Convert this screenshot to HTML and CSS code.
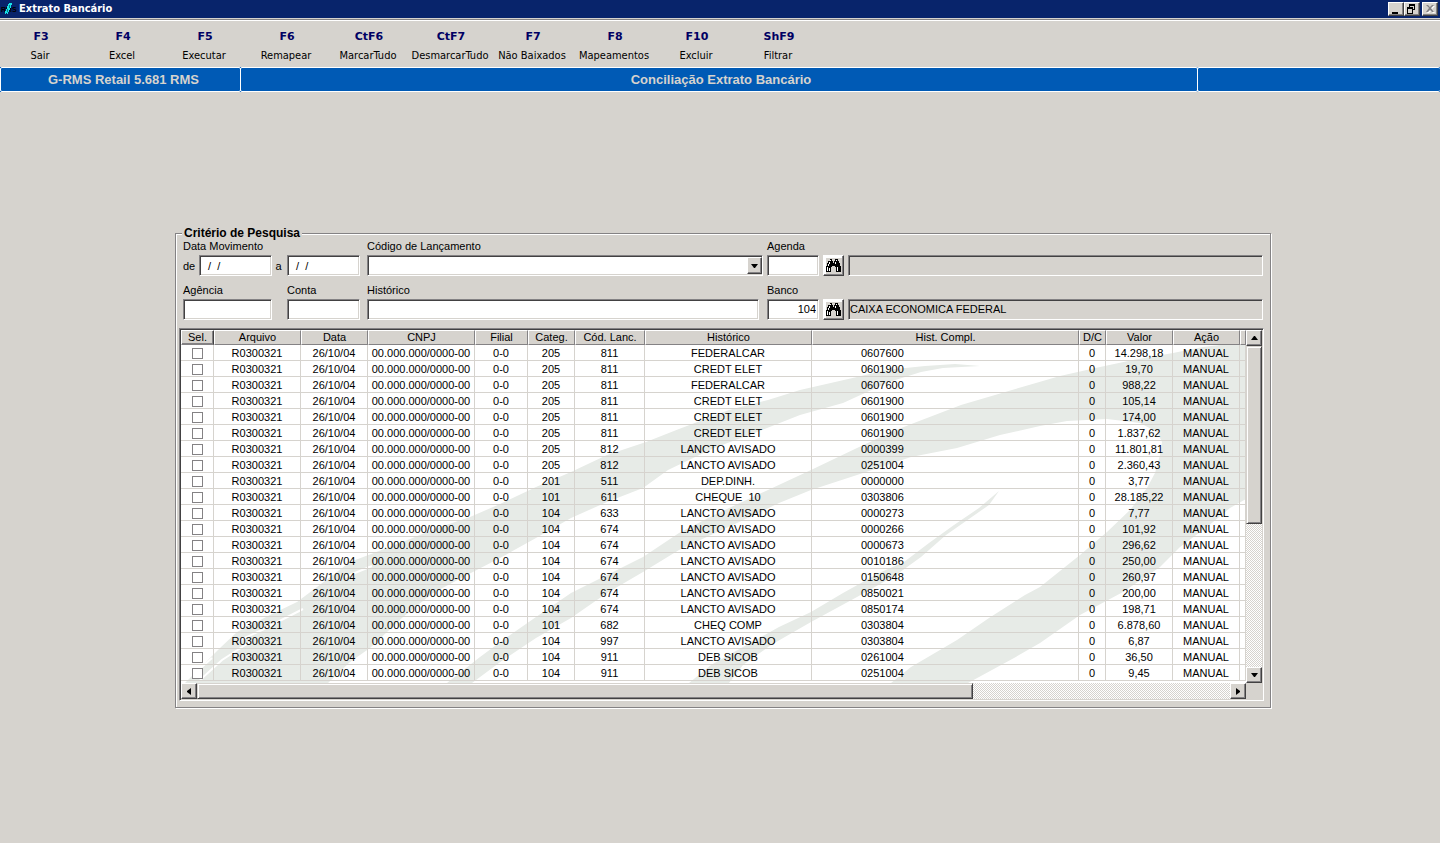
FILE: index.html
```html
<!DOCTYPE html>
<html lang="pt-BR">
<head>
<meta charset="utf-8">
<title>Extrato Bancário</title>
<link rel="stylesheet" href="styles.css">
</head>
<body>
<svg class="defs" aria-hidden="true">
  <symbol id="binoculars" viewBox="0 0 15 13">
    <path d="M4 0h2v2h1v2h1V2h1V0h3v2h1v2h1v3h1v6h-5V8H9V7H6v1H5v5H0V7h1V4h1V2h2z" fill="#000"/>
    <path d="M4 1h1v1H4zM3 3h1v2H3zM10 1h1v1h-1zM9 3h1v2H9zM2 5h1v2H2zM1 8h1v4H1zM3 9h1v3H3zM11 8h1v4h-1z" fill="#fff"/>
  </symbol>
</svg>

<header class="titlebar">
  <svg class="logo" viewBox="0 0 18 18" width="18" height="18" aria-hidden="true">
    <text x="1" y="12" class="logo-text">RMS</text>
    <path d="M11 3h-2v1H8v2H7v3H6v2H5v3h1v-1h1v1h1v-2h1v-2h1V8h1V5h1V3z" fill="#18e3e7"/>
    <path d="M9 5h1v3H9zM7 9h1v3H7z" fill="#087d84"/>
  </svg>
  <h1 class="title">Extrato Bancário</h1>
  <div class="window-buttons">
    <button class="win-btn" aria-label="Minimizar"><svg viewBox="0 0 12 10" width="12" height="10"><path d="M2 8h6v2H2z"/></svg></button>
    <button class="win-btn" aria-label="Restaurar"><svg viewBox="0 0 12 10" width="12" height="10"><path d="M3 0h6v6H7v4H1V3h2zM4 2v1h3v2h1V2zM2 5v4h4V5z" fill-rule="evenodd"/></svg></button>
    <button class="win-btn win-close" aria-label="Fechar" disabled><svg viewBox="0 0 12 10" width="12" height="10"><path d="M3 2h2l2 2 2-2h2L8 5l3 4H9L7 7 5 9H3l3-4z" fill="#fff"/><path d="M2 1h2l2 2 2-2h2L7 4l3 4H8L6 6 4 8H2l3-4z" fill="#848284"/></svg></button>
  </div>
</header>

<nav class="toolbar">
  <button class="tool"><b>F3</b><span>Sair</span></button>
  <button class="tool"><b>F4</b><span>Excel</span></button>
  <button class="tool"><b>F5</b><span>Executar</span></button>
  <button class="tool"><b>F6</b><span>Remapear</span></button>
  <button class="tool"><b>CtF6</b><span>MarcarTudo</span></button>
  <button class="tool"><b>CtF7</b><span>DesmarcarTudo</span></button>
  <button class="tool"><b>F7</b><span>Não Baixados</span></button>
  <button class="tool"><b>F8</b><span>Mapeamentos</span></button>
  <button class="tool"><b>F10</b><span>Excluir</span></button>
  <button class="tool"><b>ShF9</b><span>Filtrar</span></button>
</nav>

<div class="banner">
  <div class="banner-side">G-RMS Retail 5.681 RMS</div>
  <div class="banner-main">Conciliação Extrato Bancário</div>
  <div class="banner-side"></div>
</div>

<main class="content">
  <fieldset class="group">
    <legend>Critério de Pesquisa</legend>

    <div class="criteria">
      <label class="span2" for="date-from">Data Movimento</label>
      <label for="code">Código de Lançamento</label>
      <label class="span3" for="agenda">Agenda</label>

      <div class="from">
        <label for="date-from">de</label>
        <input class="field date" id="date-from" type="text" value="  /  /">
        <label class="to" for="date-to">a</label>
      </div>
      <input class="field date" id="date-to" type="text" value="  /  /">
      <div class="combo">
        <select class="field" id="code"><option></option></select>
        <span class="combo-arrow"><svg viewBox="0 0 7 4" width="7" height="4"><path d="M0 0h7L4 4H3z"/></svg></span>
      </div>
      <input class="field" id="agenda" type="text">
      <button class="lookup" aria-label="Procurar agenda"><svg width="15" height="13"><use href="#binoculars"/></svg></button>
      <input class="field" type="text" aria-label="Nome da agenda" readonly>

      <label class="second" for="agency">Agência</label>
      <label class="second" for="account">Conta</label>
      <label class="second" for="history">Histórico</label>
      <label class="second span3" for="bank">Banco</label>

      <input class="field agency" id="agency" type="text">
      <input class="field date" id="account" type="text">
      <input class="field history" id="history" type="text">
      <input class="field number" id="bank" type="text" value="104">
      <button class="lookup" aria-label="Procurar banco"><svg width="15" height="13"><use href="#binoculars"/></svg></button>
      <input class="field" type="text" aria-label="Nome do banco" value="CAIXA ECONOMICA FEDERAL" readonly>
    </div>

    <div class="grid-frame">
      <div class="grid-view">
        <svg class="watermark" viewBox="181 345 1065 338" preserveAspectRatio="none" aria-hidden="true">
          <g fill="#e7ebe7">
            <path d="M980 366L955 364L925 366L886 370L857 377L800 390L768 400L729 410L679 429L646 442L607 455L571 472L536 487L500 504L470 517L440 527L400 543L350 562L313 590L297 602L270 615L237 632L220 648L185 683H328L350 662L370 648L403 617L433 593L467 575L500 558L536 538L571 518L607 502L643 488L668 470L714 448L757 432L800 415L843 403L889 382L921 372L943 368z"/>
            <path d="M1246 345H1220L1203 347L1173 353L1133 360L1100 367L1060 376L1029 385L961 405L914 423L896 430L857 448L811 470L768 490L714 515L679 533L643 557L607 575L571 593L536 617L503 640L480 657L447 683H472L503 660L536 638L571 618L607 593L643 572L679 550L711 535L750 517L779 503L811 490L857 475L911 457L957 448L1000 435L1040 426L1067 421L1107 419L1140 423L1157 432L1162 442L1160 455L1155 473L1147 488L1130 510L1107 532L1080 555L1040 587L1025 595L989 618L957 640L911 667L891 683H968L1014 658L1040 643L1080 615L1123 592L1160 567L1180 547L1207 527L1230 508L1246 499z"/>
            <path d="M999 491L979 508L954 525L929 543L904 562L879 573L843 593L811 612L779 627L743 647L711 665L689 683H729L743 665L771 645L811 622L857 597L896 575L921 557L946 535L989 505z"/>
          </g>
          <path d="M200 680L222 660L250 642M196 672L212 658M238 641L262 630L303 609M345 577L372 566" fill="none" stroke="#fff" stroke-width="2"/>
        </svg>
        <table class="grid">
          <colgroup>
            <col class="w-sel"><col class="w-file"><col class="w-std"><col class="w-cnpj"><col class="w-branch"><col class="w-categ"><col class="w-code"><col class="w-hist"><col><col class="w-dc"><col class="w-std"><col class="w-std"><col class="w-end">
          </colgroup>
          <thead>
            <tr><th class="current">Sel.</th><th>Arquivo</th><th>Data</th><th>CNPJ</th><th>Filial</th><th>Categ.</th><th>Cód. Lanc.</th><th>Histórico</th><th>Hist. Compl.</th><th>D/C</th><th>Valor</th><th>Ação</th><th></th></tr>
          </thead>
          <tbody id="rows"></tbody>
        </table>
      </div>
      <div class="scroll vertical">
        <button class="scroll-btn" aria-label="Para cima"><svg viewBox="0 0 7 4" width="7" height="4"><path d="M3 0h1l3 4H0z"/></svg></button>
        <div class="thumb"></div>
        <div class="track"></div>
        <button class="scroll-btn" aria-label="Para baixo"><svg viewBox="0 0 7 4" width="7" height="4"><path d="M0 0h7L4 4H3z"/></svg></button>
      </div>
      <div class="scroll horizontal">
        <button class="scroll-btn" aria-label="Para a esquerda"><svg viewBox="0 0 4 7" width="4" height="7"><path d="M4 0v7L0 4V3z"/></svg></button>
        <div class="thumb"></div>
        <div class="track"></div>
        <button class="scroll-btn" aria-label="Para a direita"><svg viewBox="0 0 4 7" width="4" height="7"><path d="M0 0v7l4-3V3z"/></svg></button>
      </div>
    </div>
  </fieldset>
</main>
<script src="rows.js"></script>
</body>
</html>
```

FILE: rows.js
```js
// category, entry code, description, complement, amount
const entries = [
  ["205", "811", "FEDERALCAR", "0607600", "14.298,18"],
  ["205", "811", "CREDT ELET", "0601900", "19,70"],
  ["205", "811", "FEDERALCAR", "0607600", "988,22"],
  ["205", "811", "CREDT ELET", "0601900", "105,14"],
  ["205", "811", "CREDT ELET", "0601900", "174,00"],
  ["205", "811", "CREDT ELET", "0601900", "1.837,62"],
  ["205", "812", "LANCTO AVISADO", "0000399", "11.801,81"],
  ["205", "812", "LANCTO AVISADO", "0251004", "2.360,43"],
  ["201", "511", "DEP.DINH.", "0000000", "3,77"],
  ["101", "611", "CHEQUE  10", "0303806", "28.185,22"],
  ["104", "633", "LANCTO AVISADO", "0000273", "7,77"],
  ["104", "674", "LANCTO AVISADO", "0000266", "101,92"],
  ["104", "674", "LANCTO AVISADO", "0000673", "296,62"],
  ["104", "674", "LANCTO AVISADO", "0010186", "250,00"],
  ["104", "674", "LANCTO AVISADO", "0150648", "260,97"],
  ["104", "674", "LANCTO AVISADO", "0850021", "200,00"],
  ["104", "674", "LANCTO AVISADO", "0850174", "198,71"],
  ["101", "682", "CHEQ COMP", "0303804", "6.878,60"],
  ["104", "997", "LANCTO AVISADO", "0303804", "6,87"],
  ["104", "911", "DEB SICOB", "0261004", "36,50"],
  ["104", "911", "DEB SICOB", "0251004", "9,45"]
];

document.getElementById("rows").innerHTML = entries.map(([categ, code, hist, extra, amount], i) => `
  <tr>
    <td><input class="check" type="checkbox" aria-label="Selecionar linha ${i + 1}"></td>
    <td>R0300321</td><td>26/10/04</td><td>00.000.000/0000-00</td><td>0-0</td>
    <td>${categ}</td><td>${code}</td><td>${hist}</td><td class="extra">${extra}</td>
    <td>0</td><td>${amount}</td><td>MANUAL</td><td></td>
  </tr>`).join("");
```

FILE: styles.css
```css
:root {
  --face: #d6d3ce;
  --shadow: #848284;
  --dark: #424142;
  --ui: "Liberation Sans", Arial, sans-serif;
  --caption: "DejaVu Sans Condensed", "DejaVu Sans", sans-serif;
}

* { box-sizing: border-box; }

body {
  margin: 0;
  min-height: 100vh;
  background: var(--face);
  color: #000;
  font: 11px/12px var(--ui);
}

button, input, select { font: inherit; color: inherit; margin: 0; }
button { padding: 0; }
.defs { display: none; }

/* Title bar */
.titlebar {
  display: flex;
  align-items: center;
  height: 18px;
  padding-right: 2px;
  background: #08246b;
}
.logo { flex: none; }
.logo-text { font: bold 7px var(--ui); fill: #000; }
.title {
  flex: 1;
  margin: 0 0 0 1px;
  color: #fff;
  font: bold 11px/18px var(--caption);
}
.window-buttons { display: flex; }
.win-btn {
  display: flex;
  width: 16px;
  height: 14px;
  border: 1px solid;
  border-color: #fff var(--dark) var(--dark) #fff;
  box-shadow: inset -1px -1px 0 var(--shadow);
  background: var(--face);
  padding: 1px;
}
.win-close { margin-left: 2px; }

/* Function key bar */
.toolbar {
  display: flex;
  height: 49px;
  padding-top: 10px;
  border-top: 1px solid var(--shadow);
  margin-top: 1px;
  box-shadow: inset 0 1px 0 #fff;
}
.tool {
  display: flex;
  flex-direction: column;
  align-items: center;
  gap: 6px;
  width: 82px;
  border: 0;
  background: none;
  font: 11px/13px var(--caption);
  white-space: nowrap;
}
.tool b { color: #000063; font: bold 11px/13px "DejaVu Sans", sans-serif; }
.tool span { padding-right: 2px; }

/* Banner */
.banner {
  display: flex;
  margin-top: -1px;
  background: #005ab5;
  color: var(--face);
  font: bold 13px/24px var(--ui);
  text-align: center;
}
.banner-side, .banner-main {
  height: 25px;
  border: 1px solid #fff;
  border-radius: 2px;
  white-space: nowrap;
}
.banner-side { width: 241px; padding-left: 6px; }
.banner-side:last-child { width: 243px; border-right: 0; }
.banner-main { flex: 1; margin: 0 -1px; padding-left: 4px; }

/* Search group */
.content { padding: 135px 169px 135px 175px; }
.group {
  min-width: 0;
  margin: 0;
  padding: 0 6px 6px 3px;
  border: 1px solid var(--shadow);
  box-shadow: 1px 1px 0 #fff, inset 1px 1px 0 #fff;
}
.group legend {
  margin-left: 3px;
  padding: 0 2px;
  background: var(--face);
  font: bold 12px/13px var(--ui);
}
.criteria {
  display: grid;
  grid-template-columns: 100px 76px minmax(0, 396fr) 52px 21px minmax(0, 415fr);
  gap: 3px 4px;
  padding: 0 1px 8px 4px;
}
.criteria .date { width: 73px; }
.criteria .agency { width: 89px; }
.criteria .history { width: calc(100% - 4px); }
.criteria .second { margin-top: 5px; }
.span2 { grid-column: span 2; }
.span3 { grid-column: span 3; }
.from { display: flex; align-items: center; }
.from label { width: 16px; }
.from .to { width: 11px; padding-left: 2px; text-align: center; }
.from .field { flex: none; }
.field {
  width: 100%;
  height: 21px;
  border: 1px solid;
  border-color: var(--shadow) #fff #fff var(--shadow);
  border-radius: 0;
  box-shadow: inset 1px 1px 0 var(--dark), inset -1px -1px 0 var(--face);
  background: #fff;
  padding: 0 2px;
  outline: 0;
  appearance: none;
  white-space: pre;
}
.field[readonly] { background: var(--face); padding: 0 1px 2px; }
.criteria .number { padding-bottom: 2px; text-align: right; }
.combo { position: relative; }
.combo-arrow {
  position: absolute;
  top: 2px;
  right: 1px;
  bottom: 2px;
  width: 15px;
  pointer-events: none;
}
.combo-arrow, .scroll-btn, .lookup {
  display: flex;
  align-items: center;
  justify-content: center;
  border: 1px solid;
  border-color: #fff var(--dark) var(--dark) #fff;
  box-shadow: inset -1px -1px 0 var(--shadow);
  background: var(--face);
}
.lookup {
  width: 21px;
  height: 21px;
  box-shadow: inset -1px -1px 0 var(--shadow), inset 2px 2px 0 #fff;
}

/* Statement grid */
.grid-frame {
  display: grid;
  grid-template-columns: minmax(0, 1fr) 16px;
  border: 1px solid;
  border-color: var(--shadow) #fff #fff var(--shadow);
  box-shadow: inset 1px 1px 0 var(--dark);
  padding: 1px;
}
.grid-view {
  position: relative;
  padding-bottom: 2px;
  background: #fff;
  overflow: hidden;
}
.watermark {
  position: absolute;
  left: 0;
  top: 15px;
  width: 100%;
  height: calc(100% - 15px);
}
.grid {
  position: relative;
  width: 100%;
  table-layout: fixed;
  border-collapse: separate;
  border-spacing: 0;
  text-align: center;
  white-space: pre;
}
.w-sel { width: 33px; }
.w-file { width: 87px; }
.w-std { width: 67px; }
.w-cnpj { width: 107px; }
.w-branch { width: 53px; }
.w-categ { width: 47px; }
.w-code { width: 70px; }
.w-hist { width: 167px; }
.w-dc { width: 27px; }
.w-end { width: 6px; }
.grid th {
  height: 15px;
  padding: 0;
  border: 1px solid;
  border-color: #fff var(--shadow) var(--shadow) #fff;
  background: var(--face);
  font-weight: normal;
  line-height: 13px;
}
.grid .current { border-right-color: var(--dark); box-shadow: inset -1px -1px 0 var(--shadow); }
.grid td {
  height: 16px;
  padding: 1px 0 0;
  border: solid var(--face);
  border-width: 0 1px 1px 0;
  line-height: 14px;
}
.grid .extra { padding-left: 49px; text-align: left; }
.check {
  display: block;
  width: 11px;
  height: 11px;
  margin: 0 auto;
  border: 1px solid var(--shadow);
  background: #fff;
  appearance: none;
}

/* Scroll bars */
.scroll { display: flex; }
.vertical { flex-direction: column; }
.scroll-btn { flex: none; width: 16px; height: 16px; }
.thumb {
  flex: 177;
  border: 1px solid;
  border-color: var(--face) var(--dark) var(--dark) var(--face);
  box-shadow: inset 1px 1px 0 #fff, inset -1px -1px 0 var(--shadow);
  background: var(--face);
}
.track {
  flex: 144;
  background: conic-gradient(#fff 25%, var(--face) 0 50%, #fff 0 75%, var(--face) 0) 0 0 / 2px 2px;
}
.horizontal .thumb { flex: 775; }
.horizontal .track { flex: 258; }
```
